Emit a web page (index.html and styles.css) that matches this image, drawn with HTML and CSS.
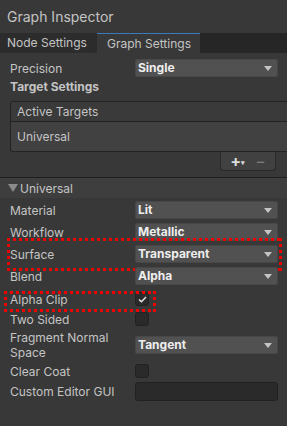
FILE: index.html
```html
<html lang="en">
<head>
  <meta charset="UTF-8">
  <title>Graph Inspector</title>
  <link rel="stylesheet" href="styles.css">
</head>
<body>

  <div class="title">Graph Inspector</div>

  <div class="tabs">
    <div class="tab">Node Settings</div>
    <div class="tab active">Graph Settings</div>
  </div>

  <div class="panel">
    <div class="row first-row">
      <div class="label">Precision</div>
      <div class="dropdown">Single</div>
    </div>

    <div class="section-title">Target Settings</div>

    <div class="list">
      <div class="list-head">Active Targets</div>
      <div class="list-body">Universal</div>
    </div>
    <div class="list-foot">
      <span class="plus">+<span class="tiny">&#9662;</span></span>
      <span class="minus">&minus;</span>
    </div>

    <div class="foldout"><span class="arrow"></span>Universal</div>

    <div class="row">
      <div class="label">Material</div>
      <div class="dropdown">Lit</div>
    </div>
    <div class="row">
      <div class="label">Workflow</div>
      <div class="dropdown">Metallic</div>
    </div>
    <div class="row">
      <div class="label">Surface</div>
      <div class="dropdown">Transparent</div>
      <div class="mark mark-surface"></div>
    </div>
    <div class="row">
      <div class="label">Blend</div>
      <div class="dropdown">Alpha</div>
    </div>
    <div class="row check-row">
      <div class="label">Alpha Clip</div>
      <div class="checkbox">
        <svg width="9" height="7" viewBox="0 0 9 7"><path d="M1 3.6 L3.4 5.8 L8 1" fill="none" stroke="#e8e8e8" stroke-width="1.4"/></svg>
      </div>
      <div class="mark mark-clip"></div>
    </div>
    <div class="row check-row">
      <div class="label">Two Sided</div>
      <div class="checkbox"></div>
    </div>
    <div class="row tall-row">
      <div class="label">Fragment Normal<br>Space</div>
      <div class="dropdown">Tangent</div>
    </div>
    <div class="row check-row">
      <div class="label">Clear Coat</div>
      <div class="checkbox"></div>
    </div>
    <div class="row check-row">
      <div class="label">Custom Editor GUI</div>
      <div class="textfield"></div>
    </div>
  </div>

</body>
</html>
```

FILE: styles.css
```css
* {
  box-sizing: border-box;
}
body {
  margin: 0;
  background: #383838;
  font-family: Inter, "Noto Sans", sans-serif;
  font-size: 12px;
  color: #c4c4c4;
  overflow: hidden;
}
.title {
  height: 33px;
  line-height: 33px;
  padding-left: 7px;
  font-size: 14px;
  color: #c4c4c4;
  background: #383838;
}
.tabs {
  display: flex;
  height: 20px;
  background: #262626;
}
.tab {
  width: 97px;
  padding-left: 7px;
  line-height: 20px;
  white-space: nowrap;
  background: #2c2c2c;
}
.tab.active {
  width: 103px;
  padding-left: 10px;
  background: #383838;
  border-top: 1px solid #3a79bb;
  line-height: 19px;
}
.panel {
  padding: 0 9px 0 10px;
}
.row {
  position: relative;
  display: flex;
  align-items: center;
  height: 18px;
  margin-bottom: 4px;
}
.first-row {
  margin-top: 6px;
  margin-bottom: 0;
}
.check-row {
  height: 20px;
  margin-bottom: 0;
}
.tall-row {
  height: 32px;
  margin-bottom: 0;
}
.label {
  width: 125px;
  flex: none;
  line-height: 15px;
  white-space: nowrap;
}
.dropdown {
  position: relative;
  flex: 1;
  height: 18px;
  line-height: 18px;
  padding-left: 3px;
  background: #515151;
  border-radius: 3px;
  box-shadow: inset 0 0 0 1px #474747;
  font-weight: bold;
  color: #eeeeee;
}
.dropdown::after {
  content: "";
  position: absolute;
  right: 6px;
  top: 7px;
  border-left: 4px solid transparent;
  border-right: 4px solid transparent;
  border-top: 5px solid #c4c4c4;
}
.checkbox {
  width: 14px;
  height: 14px;
  display: flex;
  align-items: center;
  justify-content: center;
  background: #2a2a2a;
  border: 1px solid #212121;
  border-radius: 3px;
}
.textfield {
  flex: 1;
  height: 19px;
  background: #2a2a2a;
  border: 1px solid #212121;
  border-radius: 3px;
}
.section-title {
  height: 20px;
  line-height: 20px;
  font-weight: bold;
  margin-bottom: 4px;
}
.list {
  margin-right: -14px;
  border: 1px solid #232323;
  border-right: none;
  border-radius: 3px 0 0 3px;
  background: #414141;
}
.list-head {
  height: 20px;
  line-height: 19px;
  padding-left: 6px;
  background: #3a3a3a;
  border-bottom: 1px solid #232323;
}
.list-body {
  height: 29px;
  line-height: 29px;
  padding-left: 6px;
}
.list-foot {
  margin-left: auto;
  margin-right: 2px;
  width: 56px;
  height: 19px;
  background: #414141;
  border: 1px solid #2a2a2a;
  border-top: none;
  border-radius: 0 0 4px 4px;
  display: flex;
  gap: 14px;
  justify-content: center;
  align-items: center;
  font-size: 16px;
  line-height: 16px;
}
.plus {
  color: #dcdcdc;
  font-weight: bold;
  position: relative;
}
.tiny {
  position: absolute;
  font-size: 7px;
  right: -4px;
  bottom: -2px;
}
.minus {
  color: #7a7a7a;
}
.foldout {
  margin: 6px -9px 3px -10px;
  height: 21px;
  padding-left: 8px;
  background: #3e3e3e;
  border-top: 1px solid #1f1f1f;
  display: flex;
  align-items: center;
}
.arrow {
  width: 0;
  height: 0;
  border-left: 5px solid transparent;
  border-right: 5px solid transparent;
  border-top: 8px solid #8a8a8a;
  margin-right: 2px;
}
.mark {
  position: absolute;
  background:
    repeating-linear-gradient(90deg, #ee0000 0 3px, transparent 3px 6px) top left / 100% 3px no-repeat,
    repeating-linear-gradient(90deg, #ee0000 0 3px, transparent 3px 6px) bottom left / 100% 3px no-repeat,
    repeating-linear-gradient(180deg, #ee0000 0 3px, transparent 3px 6px) top left / 3px 100% no-repeat,
    repeating-linear-gradient(180deg, #ee0000 0 3px, transparent 3px 6px) top right / 3px 100% no-repeat;
}
.mark-surface {
  left: -3px;
  right: -4px;
  top: -7px;
  bottom: -8px;
}
.mark-clip {
  left: -6px;
  width: 152px;
  top: 2px;
  bottom: -3px;
}
```
